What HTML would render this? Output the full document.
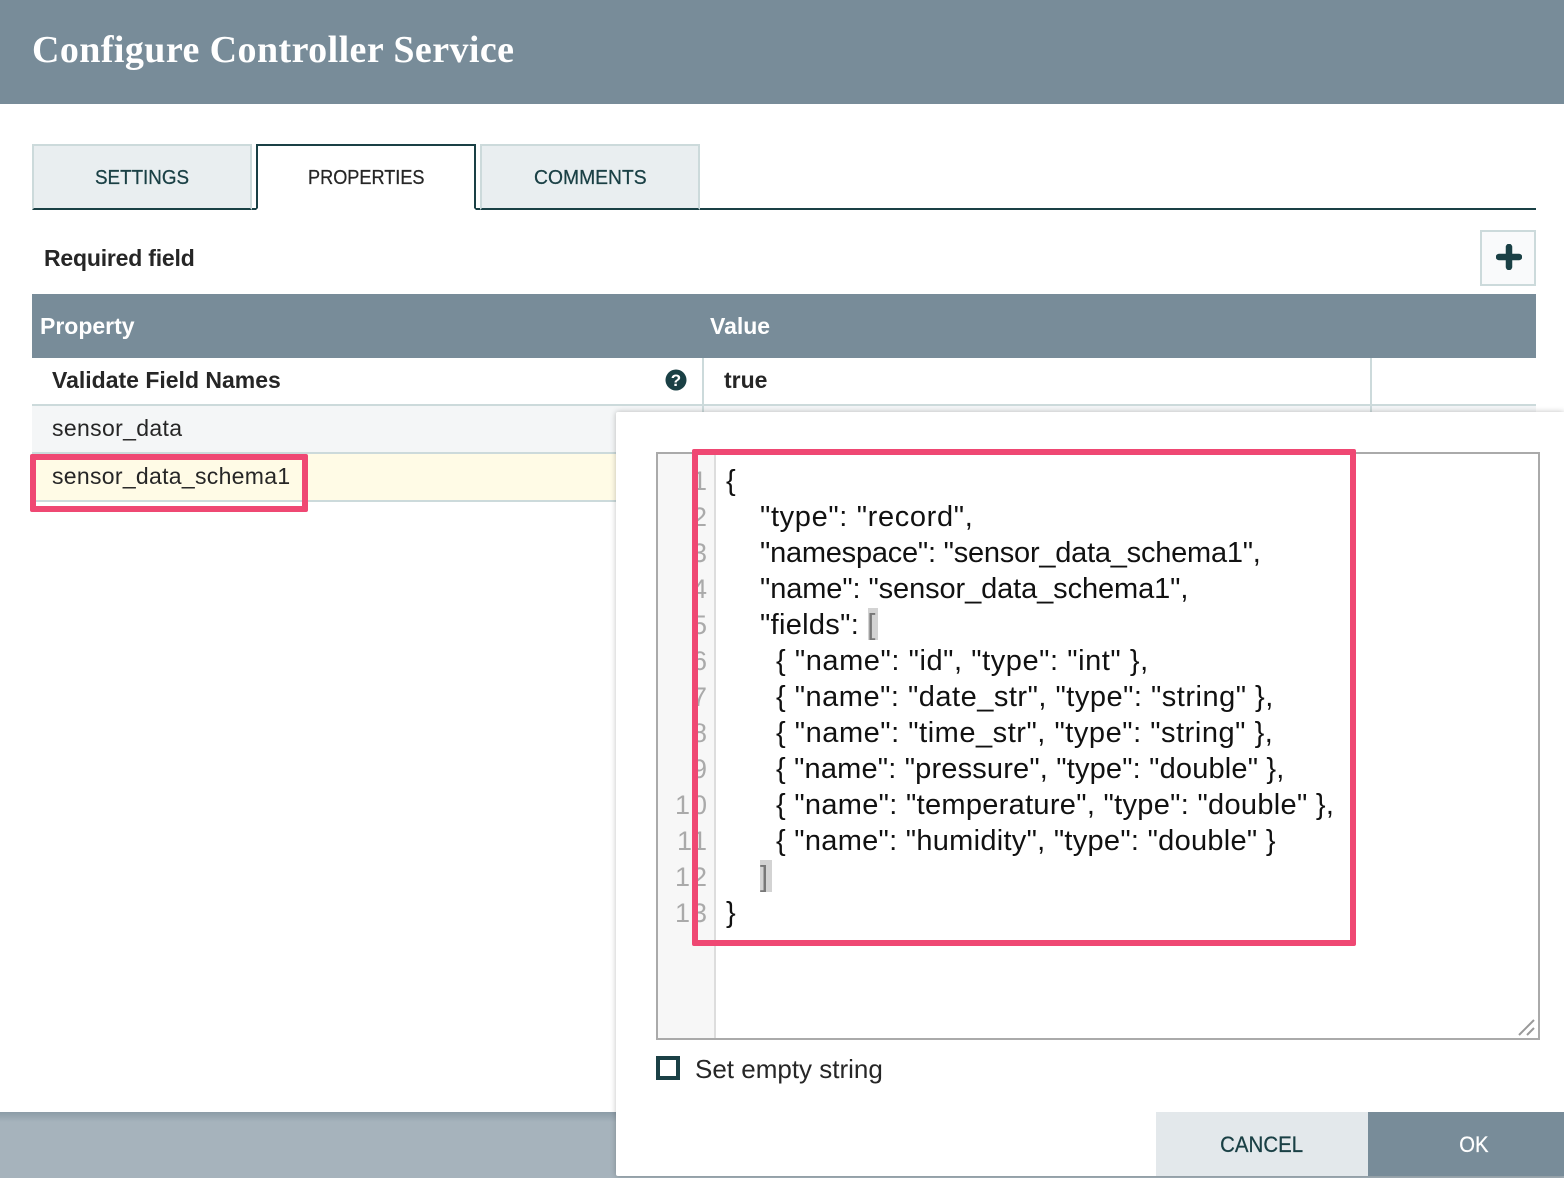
<!DOCTYPE html>
<html><head><meta charset="utf-8"><style>
*{box-sizing:border-box}
html,body{margin:0;padding:0}
body{width:1564px;height:1178px;position:relative;overflow:hidden;background:#fff;font-family:"Liberation Sans",sans-serif}
.a{position:absolute;white-space:pre}
.tab{position:absolute;top:144px;width:220px;height:66px;background:#e9eef0;border:2px solid #ccdadb;border-bottom:2px solid #1a4045;text-align:center;line-height:64px;font-size:20px;color:#1a4045;-webkit-text-stroke:.25px}
.s{display:inline-block;transform-origin:50% 50%}
.cl{position:absolute;left:0;height:36px;line-height:36px;font-size:29px;color:#111;white-space:pre;font-family:"Liberation Sans",sans-serif}
.n{position:absolute;width:40px;left:669px;text-align:right;font-size:27px;color:#aaa;line-height:36px;height:36px;letter-spacing:2px}
</style></head><body>
<div class="a" style="left:0;top:0;width:1564px;height:104px;background:#788c99"></div>
<div class="a" style="left:32px;top:28px;font:bold 38px/44px 'Liberation Serif',serif;color:#fff;letter-spacing:.42px">Configure Controller Service</div>

<div class="a" style="left:32px;top:208px;width:1504px;height:2px;background:#1a4045"></div>
<div class="tab" style="left:32px;border-left-color:#ccdadb"><span class="s" style="transform:scaleX(.94)">SETTINGS</span></div>
<div class="tab" style="left:256px;background:#fff;border-color:#1a4045;border-bottom:2px solid #fff;color:#262626"><span class="s" style="transform:scaleX(.906)">PROPERTIES</span></div>
<div class="tab" style="left:480px"><span class="s" style="transform:scaleX(.965)">COMMENTS</span></div>

<div class="a" style="left:44px;top:243px;font:bold 23px/30px 'Liberation Sans',sans-serif;color:#262626;letter-spacing:-.2px">Required field</div>
<div class="a" style="left:1480px;top:230px;width:56px;height:56px;background:#f9fafb;border:2px solid #ccdadb"></div>
<svg class="a" style="left:1496px;top:244px" width="26" height="26" viewBox="0 0 26 26"><path d="M13 3v20M3 13h20" stroke="#1a4045" stroke-width="6.5" stroke-linecap="round" fill="none"/></svg>

<div class="a" style="left:32px;top:294px;width:1504px;height:64px;background:#788c99"></div>
<div class="a" style="left:40px;top:311px;font:bold 23px/30px 'Liberation Sans',sans-serif;color:#fff">Property</div>
<div class="a" style="left:710px;top:311px;font:bold 23px/30px 'Liberation Sans',sans-serif;color:#fff">Value</div>

<div class="a" style="left:32px;top:358px;width:1504px;height:48px;background:#fff;border-bottom:2px solid #ccdadb"></div>
<div class="a" style="left:32px;top:406px;width:1504px;height:48px;background:#f4f6f7;border-bottom:2px solid #ccdadb"></div>
<div class="a" style="left:32px;top:454px;width:1504px;height:48px;background:#fffbe6;border-bottom:2px solid #ccdadb"></div>
<div class="a" style="left:702px;top:358px;width:2px;height:60px;background:#ccdadb"></div>
<div class="a" style="left:1370px;top:358px;width:2px;height:60px;background:#ccdadb"></div>

<div class="a" style="left:52px;top:365px;font:bold 23px/30px 'Liberation Sans',sans-serif;color:#262626">Validate Field Names</div>
<svg class="a" style="left:665px;top:369px" width="22" height="22" viewBox="0 0 22 22"><circle cx="11" cy="11" r="10.5" fill="#1a4045"/><text x="11" y="17" text-anchor="middle" font-family="Liberation Sans" font-weight="bold" font-size="17" fill="#fff">?</text></svg>
<div class="a" style="left:724px;top:365px;font:bold 23px/30px 'Liberation Sans',sans-serif;color:#262626">true</div>
<div class="a" style="left:52px;top:413px;font:23px/30px 'Liberation Sans',sans-serif;color:#262626;letter-spacing:.35px">sensor_data</div>
<div class="a" style="left:52px;top:461px;font:23px/30px 'Liberation Sans',sans-serif;color:#262626;letter-spacing:.3px">sensor_data_schema1</div>

<div class="a" style="left:0;top:1112px;width:1564px;height:66px;background:linear-gradient(#8c9ca7 0,#a6b3bc 10px)"></div>
<div class="a" style="left:30px;top:454px;width:278px;height:58px;border:6px solid #ef4873;border-radius:2px"></div>

<div class="a" style="left:616px;top:412px;width:948px;height:764px;background:#fff;border-radius:2px 0 0 2px;box-shadow:0 0 6px rgba(0,0,0,.25)"></div>

<div class="a" style="left:656px;top:452px;width:884px;height:588px;border:2px solid #aaa;background:#fff"></div>
<div class="a" style="left:658px;top:454px;width:58px;height:584px;background:#f7f7f7;border-right:2px solid #ddd"></div>

<div class="n" style="top:463px">1</div>
<div class="n" style="top:499px">2</div>
<div class="n" style="top:535px">3</div>
<div class="n" style="top:571px">4</div>
<div class="n" style="top:607px">5</div>
<div class="n" style="top:643px">6</div>
<div class="n" style="top:679px">7</div>
<div class="n" style="top:715px">8</div>
<div class="n" style="top:751px">9</div>
<div class="n" style="top:787px">10</div>
<div class="n" style="top:823px">11</div>
<div class="n" style="top:859px">12</div>
<div class="n" style="top:895px">13</div>

<div class="a" style="left:868px;top:608px;width:10px;height:32px;background:#d3d3d3"></div>
<div class="a" style="left:760px;top:860px;width:12px;height:32px;background:#d3d3d3"></div>

<div class="cl" style="left:726px;top:463px">{</div>
<div class="cl" style="left:760px;top:499px;letter-spacing:.65px">"type": "record",</div>
<div class="cl" style="left:760px;top:535px;letter-spacing:-.23px">"namespace": "sensor_data_schema1",</div>
<div class="cl" style="left:760px;top:571px;letter-spacing:-.1px">"name": "sensor_data_schema1",</div>
<div class="cl" style="left:760px;top:607px;letter-spacing:.3px">"fields": <span style="color:#777">[</span></div>
<div class="cl" style="left:776px;top:643px;letter-spacing:.56px">{ "name": "id", "type": "int" },</div>
<div class="cl" style="left:776px;top:679px;letter-spacing:.5px">{ "name": "date_str", "type": "string" },</div>
<div class="cl" style="left:776px;top:715px;letter-spacing:.53px">{ "name": "time_str", "type": "string" },</div>
<div class="cl" style="left:776px;top:751px;letter-spacing:.17px">{ "name": "pressure", "type": "double" },</div>
<div class="cl" style="left:776px;top:787px;letter-spacing:.3px">{ "name": "temperature", "type": "double" },</div>
<div class="cl" style="left:776px;top:823px;letter-spacing:.28px">{ "name": "humidity", "type": "double" }</div>
<div class="cl" style="left:760px;top:859px;color:#777">]</div>
<div class="cl" style="left:726px;top:895px">}</div>

<svg class="a" style="left:1516px;top:1018px" width="20" height="20" viewBox="0 0 20 20"><path d="M3 17L18 2M11 17L18 10" stroke="#999" stroke-width="2" fill="none"/></svg>

<div class="a" style="left:692px;top:449px;width:664px;height:497px;border:6px solid #ef4873;border-radius:2px"></div>

<div class="a" style="left:656px;top:1056px;width:24px;height:24px;border:4px solid #1a4045;background:#fff"></div>
<div class="a" style="left:695px;top:1054px;font:26px/30px 'Liberation Sans',sans-serif;color:#262626">Set empty string</div>

<div class="a" style="left:1156px;top:1112px;width:212px;height:64px;background:#e3e8eb;color:#1a4045;text-align:center;font-size:22px;line-height:65px;-webkit-text-stroke:.25px"><span class="s" style="transform:scaleX(.93)">CANCEL</span></div>
<div class="a" style="left:1368px;top:1112px;width:196px;height:64px;background:#788c99;color:#fff;text-align:center;font-size:22px;line-height:65px;padding-left:16px;-webkit-text-stroke:.25px"><span class="s" style="transform:scaleX(.92)">OK</span></div>
</body></html>
